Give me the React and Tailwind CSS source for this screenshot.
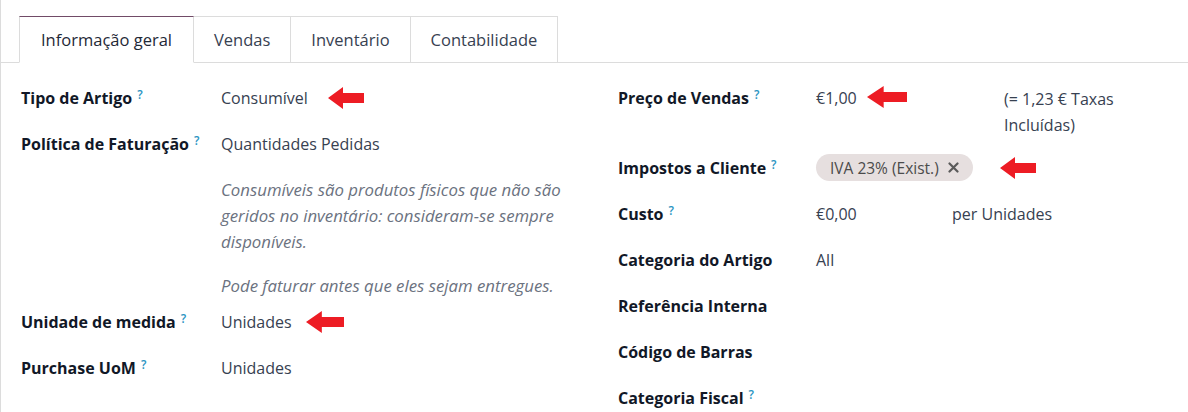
import React from 'react';

const Arrow = ({ className = '', w = 36 }) => (
    <svg width={w} height="22" viewBox="0 0 36 22" preserveAspectRatio="none" className={className}>
        <polygon points="0,11 15,0 15,6 36,6 36,16 15,16 15,22" fill="#ed1c24" />
    </svg>
);

const Help = () => (
    <sup className="ml-[5px] text-[12px] font-semibold text-[#2a94c2] relative -top-[5px]">?</sup>
);

const Label = ({ children, help }) => (
    <div className="font-bold text-[#111827]">
        {children}
        {help && <Help />}
    </div>
);

const tabs = ['Informação geral', 'Vendas', 'Inventário', 'Contabilidade'];

const App = () => {
    return (
        <div
            className="w-[1188px] h-[412px] overflow-hidden bg-white border-l border-[#dcdcdc] text-[16px] leading-[26px] text-[#374151]"
            style={{ fontFamily: '"Open Sans", "Noto Sans", sans-serif' }}
        >
            {/* Tabs */}
            <div className="pt-4 pl-[18px] border-b border-[#dcdcdc] flex">
                {tabs.map((tab, i) => (
                    <div
                        key={tab}
                        className={
                            i === 0
                                ? 'h-[47px] px-[21px] flex items-center bg-white border border-[#dcdcdc] border-t-[#714b67] -mb-px border-b-white text-[16.5px] text-[#1f2937]'
                                : 'h-[46px] px-[20px] flex items-center bg-white border-t border-r border-[#dcdcdc] text-[16.5px] text-[#374151]'
                        }
                    >
                        {tab}
                    </div>
                ))}
            </div>

            <div className="grid grid-cols-[597px_1fr] pl-[20px] pt-[12px]">
                {/* Left column */}
                <div>
                    <div className="flex py-[10px]">
                        <div className="w-[200px]"><Label help>Tipo de Artigo</Label></div>
                        <div className="flex items-center gap-[20px]">
                            <span>Consumível</span>
                            <Arrow />
                        </div>
                    </div>
                    <div className="flex py-[10px]">
                        <div className="w-[200px]"><Label help>Política de Faturação</Label></div>
                        <div>Quantidades Pedidas</div>
                    </div>
                    <div className="pl-[200px] pt-[10px] italic text-[#6b7280] text-[16.8px] w-[580px]">
                        <p className="w-[360px]">Consumíveis são produtos físicos que não são geridos no inventário: consideram-se sempre disponíveis.</p>
                        <p className="mt-[18px]">Pode faturar antes que eles sejam entregues.</p>
                    </div>
                    <div className="flex py-[10px]">
                        <div className="w-[200px]"><Label help>Unidade de medida</Label></div>
                        <div className="flex items-center gap-[14px]">
                            <span>Unidades</span>
                            <Arrow w={38} />
                        </div>
                    </div>
                    <div className="flex py-[10px]">
                        <div className="w-[200px]"><Label help>Purchase UoM</Label></div>
                        <div>Unidades</div>
                    </div>
                </div>

                {/* Right column */}
                <div>
                    <div className="flex pt-[10px] pb-[6px]">
                        <div className="w-[198px]"><Label help>Preço de Vendas</Label></div>
                        <div className="w-[188px] flex items-start">
                            <span>€1,00</span>
                            <Arrow w={40} className="ml-[10px] mt-[1px]" />
                        </div>
                        <div className="w-[125px] pt-[1px]">(= 1,23 € Taxas Incluídas)</div>
                    </div>
                    <div className="flex py-[10px] items-center">
                        <div className="w-[198px]"><Label help>Impostos a Cliente</Label></div>
                        <div className="flex items-center">
                            <span className="h-[27px] pl-[14px] pr-[14px] rounded-full bg-[#e6dfdf] text-[#4b4b4b] text-[15.5px] flex items-center gap-[9px]">
                                IVA 23% (Exist.)
                                <svg width="11" height="11" viewBox="0 0 11 11">
                                    <path d="M1.5 1.5 L9.5 9.5 M9.5 1.5 L1.5 9.5" stroke="#5a5a5a" strokeWidth="2.2" strokeLinecap="round" />
                                </svg>
                            </span>
                            <Arrow className="ml-[27px]" />
                        </div>
                    </div>
                    <div className="flex py-[10px]">
                        <div className="w-[198px]"><Label help>Custo</Label></div>
                        <div className="w-[136px]">€0,00</div>
                        <div>per Unidades</div>
                    </div>
                    <div className="flex py-[10px]">
                        <div className="w-[198px]"><Label>Categoria do Artigo</Label></div>
                        <div>All</div>
                    </div>
                    <div className="flex py-[10px]">
                        <div className="w-[198px]"><Label>Referência Interna</Label></div>
                    </div>
                    <div className="flex py-[10px]">
                        <div className="w-[198px]"><Label>Código de Barras</Label></div>
                    </div>
                    <div className="flex py-[10px]">
                        <div className="w-[198px]"><Label help>Categoria Fiscal</Label></div>
                    </div>
                </div>
            </div>
        </div>
    );
};

export default App;
